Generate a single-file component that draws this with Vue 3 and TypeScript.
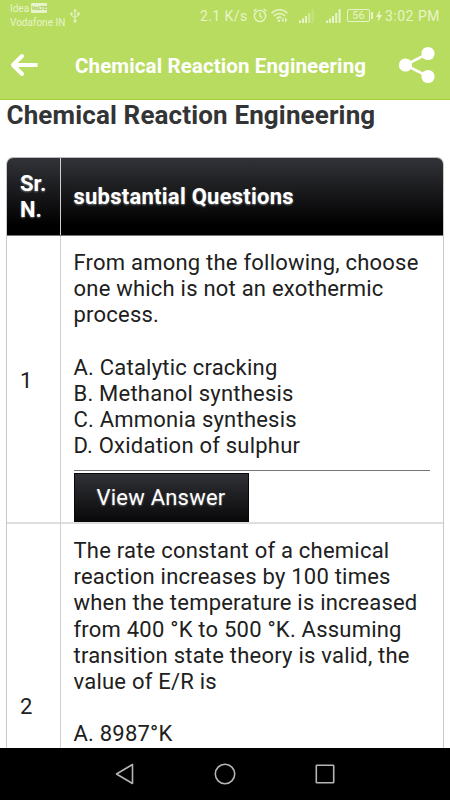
<script setup lang="ts">
interface Question {
  id: number
  lines: string[]
  options: string[]
}

const title = 'Chemical Reaction Engineering'

const questions: Question[] = [
  {
    id: 1,
    lines: ['From among the following, choose', 'one which is not an exothermic', 'process.'],
    options: ['A. Catalytic cracking', 'B. Methanol synthesis', 'C. Ammonia synthesis', 'D. Oxidation of sulphur'],
  },
  {
    id: 2,
    lines: [
      'The rate constant of a chemical',
      'reaction increases by 100 times',
      'when the temperature is increased',
      'from 400 °K to 500 °K. Assuming',
      'transition state theory is valid, the',
      'value of E/R is',
    ],
    options: ['A. 8987°K'],
  },
]
</script>

<template>
  <div class="screen">
    <div class="status">
      <div class="carriers">
        <div class="carrier">Idea<span class="volte">VoLTE</span></div>
        <div class="carrier">Vodafone IN</div>
      </div>
      <svg class="usb" width="10" height="15" viewBox="0 0 10 15" fill="none" stroke="currentColor">
        <path d="M5 2v11M1.500 6v1.500L5 10M8.500 5.500v2L5 9" />
        <path d="M3.300 3.500L5 .5l1.700 3z" fill="currentColor" stroke="none" />
        <circle cx="5" cy="13" r="1.500" fill="currentColor" stroke="none" />
        <circle cx="1.500" cy="5.800" r="1.300" fill="currentColor" stroke="none" />
        <path d="M7.300 4.500h2.400v2.400H7.300z" fill="currentColor" stroke="none" />
      </svg>
      <span class="speed">2.1 K/s</span>
      <svg class="alarm" width="14" height="15" viewBox="0 0 14 15" fill="none" stroke="currentColor" stroke-width="1.400">
        <circle cx="7" cy="8" r="5.600" />
        <path d="M7 4.800V8l2 2M.6 3.300L3.400 1M13.400 3.300L10.600 1" />
      </svg>
      <svg class="wifi" width="17" height="15" viewBox="0 0 17 15" fill="none" stroke="currentColor" stroke-width="1.600">
        <path d="M.7 5.200C5 .6 12 .6 16.300 5.200M3 8c3.200-3.300 7.800-3.300 11 0M5.500 10.700c1.700-1.700 3.500-1.900 5-.7" />
        <circle cx="8" cy="12.700" r="1.300" fill="currentColor" stroke="none" />
        <path d="M12.700 9.500v5L10.500 12zM14 9.500v5l2.500-2.500z" fill="currentColor" stroke="none" />
      </svg>
      <svg class="signal first" width="15" height="14" viewBox="0 0 15 14" fill="currentColor">
        <path d="M0 11.500h2V14H0zM3 9.500h2V14H3zM6 7h2v7H6z" />
        <path d="M9.200 4h2v10h-2z" opacity=".6" />
        <path d="M12.600 0h2v14h-2z" opacity=".3" />
      </svg>
      <svg class="signal" width="15" height="14" viewBox="0 0 15 14" fill="currentColor">
        <path d="M0 11.500h2V14H0zM3 9.500h2V14H3zM6 7h2v7H6zM9.200 4h2v10h-2zM12.600 0h2v14h-2z" />
      </svg>
      <span class="battery">56</span>
      <svg class="bolt" width="6" height="12" viewBox="0 0 6 12" fill="currentColor">
        <path d="M4 0L0 7h2.500L2 12l4-7H3.500z" />
      </svg>
      <span class="clock">3:02 PM</span>
    </div>

    <header class="appbar">
      <svg class="back" width="28" height="24" viewBox="0 0 28 24" fill="none" stroke="#fff" stroke-width="4" stroke-linecap="round" stroke-linejoin="round">
        <path d="M12 3L3 12l9 9" />
        <path d="M4 12h23.500" stroke-linecap="butt" />
      </svg>
      <span class="bar-title">{{ title }}</span>
      <svg class="share" width="38" height="38" viewBox="0 0 38 38" fill="#fff">
        <path d="M30 7.500L7.500 19 30 30.500" fill="none" stroke="#fff" stroke-width="2.600" />
        <circle cx="30" cy="7.500" r="6.600" />
        <circle cx="7.500" cy="19" r="6.600" />
        <circle cx="30" cy="30.500" r="6.600" />
      </svg>
    </header>

    <main class="content">
      <h1>{{ title }}</h1>
      <div class="table">
        <div class="row head">
          <div class="cell number">Sr.<br />N.</div>
          <div class="cell heading">substantial Questions</div>
        </div>
        <div v-for="q in questions" :key="q.id" class="row">
          <div class="cell number">{{ q.id }}</div>
          <div class="cell body">
            <div v-for="line in q.lines" :key="line" class="line">{{ line }}</div>
            <div class="options">
              <div v-for="option in q.options" :key="option" class="line">{{ option }}</div>
            </div>
            <template v-if="q.id === 1">
              <hr />
              <button type="button">View Answer</button>
            </template>
          </div>
        </div>
      </div>
    </main>

    <nav class="navbar">
      <svg width="20" height="22" viewBox="0 0 20 22"><path d="M17.500 1.500v19L1.500 11z" /></svg>
      <svg width="22" height="22" viewBox="0 0 22 22"><circle cx="11" cy="11" r="9.700" /></svg>
      <svg width="20" height="20" viewBox="0 0 20 20"><rect x="1.300" y="1.300" width="17.400" height="17.400" rx=".5" /></svg>
    </nav>
  </div>
</template>

<style>
body {
  margin: 0;
  background: #fff;
}
</style>

<style scoped>
.screen {
  width: 450px;
  height: 800px;
  display: flex;
  flex-direction: column;
  overflow: hidden;
  background: #fff;
  color: #202020;
  font-family: Roboto, 'Liberation Sans', sans-serif;
}
.screen * {
  box-sizing: border-box;
}
.status {
  flex: none;
  display: flex;
  align-items: center;
  height: 31px;
  padding: 0 10px;
  background: #b8dc60;
  color: #e7f4c9;
  white-space: nowrap;
}
.status svg,
.status span {
  flex: none;
}
.carriers {
  width: 60px;
}
.carrier {
  display: flex;
  align-items: center;
  height: 14.500px;
  font-size: 10px;
  letter-spacing: 0;
}
.volte {
  display: flex;
  align-items: center;
  justify-content: center;
  width: 16px;
  height: 10px;
  margin-left: 2px;
  border-radius: 1px;
  background: #e7f4c9;
  color: #a5c755;
  font-size: 5.500px;
  font-weight: 700;
}
.speed {
  width: 53px;
  margin-left: 120px;
  font-size: 14px;
  letter-spacing: 0.420px;
}
.wifi {
  margin-left: 4px;
}
.signal {
  margin: 0 6px 0 12px;
}
.signal.first {
  margin: 0 0 0 11px;
}
.battery {
  position: relative;
  display: flex;
  align-items: center;
  justify-content: center;
  width: 23px;
  height: 13px;
  border: 1px solid currentColor;
  border-radius: 2px;
  font-size: 11px;
}
.battery::after {
  content: '';
  position: absolute;
  right: -4px;
  top: 2px;
  width: 2px;
  height: 7px;
  background: currentColor;
}
.bolt {
  margin: 0 3px 0 6px;
}
.clock {
  font-size: 14px;
  letter-spacing: 0.500px;
}
.appbar {
  flex: none;
  display: flex;
  align-items: center;
  height: 69px;
  padding: 0 14px 0 10px;
  border-bottom: 1px solid #a6d334;
  background: #b8dc60;
}
.bar-title {
  flex: 1;
  margin-left: 37px;
  color: #fff;
  font-size: 20.500px;
  line-height: 24px;
  padding-top: 1px;
  letter-spacing: 0.120px;
  font-weight: 700;
  white-space: nowrap;
}
.content {
  flex: 1;
  min-height: 0;
  overflow: hidden;
  padding: 0 6px;
}
h1 {
  margin: 0;
  height: 57px;
  padding-left: 0.500px;
  line-height: 31px;
  color: #333435;
  font-size: 26px;
  letter-spacing: 0.140px;
  font-weight: 700;
  white-space: nowrap;
}
.table {
  width: 438px;
  overflow: hidden;
  border: 1px solid #c9c9c9;
  border-top-color: #bbb;
  border-radius: 7px 7px 0 0;
}
.row {
  display: grid;
  grid-template-columns: 54px 1fr;
  height: 288px;
  border-bottom: 2px solid #dedede;
}
.row:last-child {
  height: 376px;
}
.row.head {
  height: 78px;
  border-bottom: 1px solid #777;
  background: linear-gradient(#323338, #000 88%);
  color: #fff;
  font-weight: 700;
  text-shadow: 0 1px 2px rgba(255, 255, 255, 0.4);
}
.cell {
  padding: 14px 13px 13px 12.500px;
  font-size: 22px;
  line-height: 26.200px;
}
.number {
  display: flex;
  align-items: center;
  padding: 13px 13px 21px;
  border-right: 1px solid #d0d0d0;
}
.head .number {
  padding: 1px 13px 0;
}
.heading {
  display: flex;
  align-items: center;
  letter-spacing: 0.250px;
}
.line {
  height: 26.200px;
  white-space: nowrap;
  letter-spacing: 0.220px;
}
.options {
  margin-top: 26.200px;
}
hr {
  height: 1px;
  margin: 10px 0 2px;
  border: 0;
  background: #777;
}
button {
  display: block;
  width: 175px;
  height: 49px;
  padding: 1px 0 0;
  border: 1px solid #080808;
  border-radius: 0;
  background: linear-gradient(#303136, #09090a);
  color: #fff;
  font: 400 22px Roboto, 'Liberation Sans', sans-serif;
  letter-spacing: 0.220px;
  text-shadow: 0 1px 2px rgba(255, 255, 255, 0.35);
}
.navbar {
  flex: none;
  display: flex;
  align-items: center;
  justify-content: space-between;
  height: 52px;
  padding: 0 115px;
  background: #000;
}
.navbar svg {
  fill: none;
  stroke: #b5b5b5;
  stroke-width: 1.600;
  stroke-linejoin: round;
}
</style>
